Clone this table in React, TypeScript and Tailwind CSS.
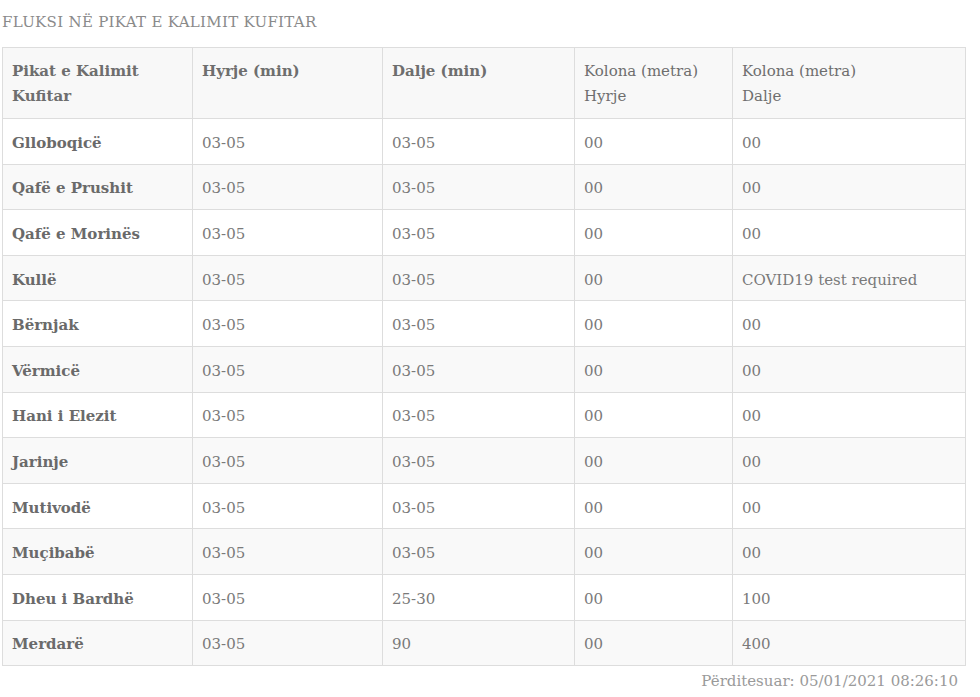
const rows: [string, string, string, string, string][] = [
  ['Glloboqicë', '03-05', '03-05', '00', '00'],
  ['Qafë e Prushit', '03-05', '03-05', '00', '00'],
  ['Qafë e Morinës', '03-05', '03-05', '00', '00'],
  ['Kullë', '03-05', '03-05', '00', 'COVID19 test required'],
  ['Bërnjak', '03-05', '03-05', '00', '00'],
  ['Vërmicë', '03-05', '03-05', '00', '00'],
  ['Hani i Elezit', '03-05', '03-05', '00', '00'],
  ['Jarinje', '03-05', '03-05', '00', '00'],
  ['Mutivodë', '03-05', '03-05', '00', '00'],
  ['Muçibabë', '03-05', '03-05', '00', '00'],
  ['Dheu i Bardhë', '03-05', '25-30', '00', '100'],
  ['Merdarë', '03-05', '90', '00', '400'],
]

export default function App() {
  return (
    <div className="bg-white w-[980px] min-h-[697px] pl-[2px] pt-[11px] font-['DejaVu_Serif',serif] text-[15px] text-[#7a7a7a]">
      {/* Titulli */}
      <h2 className="text-[15px] leading-[22px] text-[#8a8a8a] uppercase tracking-[0.02em]">
        Fluksi në pikat e kalimit kufitar
      </h2>

      <table className="mt-[14px] w-[963px] border-collapse table-fixed">
        <colgroup>
          <col className="w-[190px]" />
          <col className="w-[190px]" />
          <col className="w-[192px]" />
          <col className="w-[158px]" />
          <col className="w-[233px]" />
        </colgroup>
        <thead>
          <tr className="bg-[#f8f8f8] text-left align-top">
            <th className="border border-[#dddddd] px-[9px] pt-[11px] pb-[9px] leading-[25px] font-semibold text-[#6e6e6e]">
              Pikat e Kalimit
              <br />
              Kufitar
            </th>
            <th className="border border-[#dddddd] px-[9px] pt-[11px] pb-[9px] leading-[25px] font-semibold text-[#6e6e6e]">
              Hyrje (min)
            </th>
            <th className="border border-[#dddddd] px-[9px] pt-[11px] pb-[9px] leading-[25px] font-semibold text-[#6e6e6e]">
              Dalje (min)
            </th>
            <th className="border border-[#dddddd] px-[9px] pt-[11px] pb-[9px] leading-[25px] font-normal text-[#6e6e6e]">
              Kolona (metra)
              <br />
              Hyrje
            </th>
            <th className="border border-[#dddddd] px-[9px] pt-[11px] pb-[9px] leading-[25px] font-normal text-[#6e6e6e]">
              Kolona (metra)
              <br />
              Dalje
            </th>
          </tr>
        </thead>
        <tbody>
          {rows.map((r, i) => (
            <tr key={r[0]} className={i % 2 === 1 ? 'bg-[#f9f9f9]' : 'bg-white'}>
              <td className="border border-[#dddddd] px-[9px] pt-[3px] h-[45.6px] leading-[22px] font-bold text-[#6a6a6a]">
                {r[0]}
              </td>
              <td className="border border-[#dddddd] px-[9px] pt-[3px] h-[45.6px] leading-[22px]">{r[1]}</td>
              <td className="border border-[#dddddd] px-[9px] pt-[3px] h-[45.6px] leading-[22px]">{r[2]}</td>
              <td className="border border-[#dddddd] px-[9px] pt-[3px] h-[45.6px] leading-[22px]">{r[3]}</td>
              <td className="border border-[#dddddd] px-[9px] pt-[3px] h-[45.6px] leading-[22px]">{r[4]}</td>
            </tr>
          ))}
        </tbody>
      </table>

      <div className="w-[956px] text-right mt-[4px] text-[15px] leading-[22px] text-[#9a9a9a]">
        Përditesuar: 05/01/2021 08:26:10
      </div>
    </div>
  )
}
